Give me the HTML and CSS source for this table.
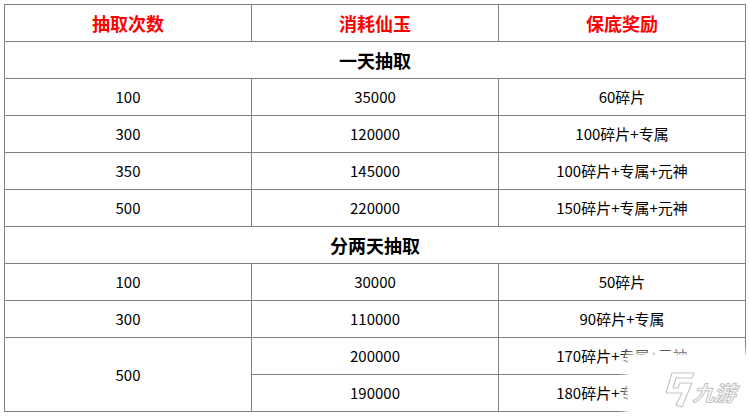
FILE: index.html
```html
<!DOCTYPE html>
<html lang="zh">
<head>
<meta charset="utf-8">
<link rel="stylesheet" href="styles.css">
</head>
<body>
<table class="draws">
  <colgroup><col class="c"><col class="c"><col class="c"></colgroup>
  <tr class="head"><td>抽取次数</td><td>消耗仙玉</td><td>保底奖励</td></tr>
  <tr class="section"><td colspan="3">一天抽取</td></tr>
  <tr><td>100</td><td>35000</td><td>60碎片</td></tr>
  <tr><td>300</td><td>120000</td><td>100碎片+专属</td></tr>
  <tr><td>350</td><td>145000</td><td>100碎片+专属+元神</td></tr>
  <tr><td>500</td><td>220000</td><td>150碎片+专属+元神</td></tr>
  <tr class="section"><td colspan="3">分两天抽取</td></tr>
  <tr><td>100</td><td>30000</td><td>50碎片</td></tr>
  <tr><td>300</td><td>110000</td><td>90碎片+专属</td></tr>
  <tr><td rowspan="2">500</td><td>200000</td><td>170碎片+专属+元神</td></tr>
  <tr><td>190000</td><td>180碎片+专属+元神</td></tr>
</table>
<div class="watermark">
  <svg class="wm-logo" viewBox="0 0 32 36" width="32" height="36">
    <path d="M9 1 L31 1 L29 6 L13 6 L10 16 L15 16 L17 11 L29 11 L19 35 L13 33 L19 21 L3 21 Z" fill="#fff" stroke="#c4c4c4" stroke-width="1.1" stroke-linejoin="round"/>
  </svg>
  <span class="wm-text">九游</span>
</div>
</body>
</html>
```
FILE: styles.css
```css
html, body {
  margin: 0;
  padding: 0;
  background: #fff;
}
body {
  padding: 4px;
  font-family: "Microsoft YaHei", "Noto Sans CJK SC", "Noto Sans", sans-serif;
  position: relative;
  width: 749px;
  height: 416px;
  box-sizing: border-box;
  overflow: hidden;
}
.draws {
  border-collapse: collapse;
  width: 742px;
  table-layout: fixed;
}
.draws td {
  border: 1px solid #808080;
  height: 36px;
  padding: 0;
  text-align: center;
  vertical-align: middle;
  font-size: 15px;
  color: #000;
  line-height: 20px;
}
.draws tr.head td {
  color: #ff0000;
  font-weight: bold;
  font-size: 18px;
}
.draws tr.section td {
  font-weight: bold;
  font-size: 18px;
}
.watermark {
  position: absolute;
  left: 628px;
  top: 355px;
  width: 130px;
  height: 70px;
  background: #fff;
  box-shadow: 0 0 8px 3px rgba(255, 255, 255, 0.95);
  display: flex;
  align-items: flex-start;
  gap: 1px;
  padding-left: 35px;
  padding-top: 17px;
  box-sizing: border-box;
}
.wm-logo {
  display: block;
  flex: none;
}
.wm-text {
  display: block;
  font-family: "Noto Sans CJK SC", sans-serif;
  font-size: 21px;
  line-height: 21px;
  font-weight: bold;
  color: #fff;
  -webkit-text-stroke: 1px #c4c4c4;
  transform: skewX(-18deg) scaleX(1.05);
  margin-top: 10px;
  letter-spacing: -1px;
}
```
